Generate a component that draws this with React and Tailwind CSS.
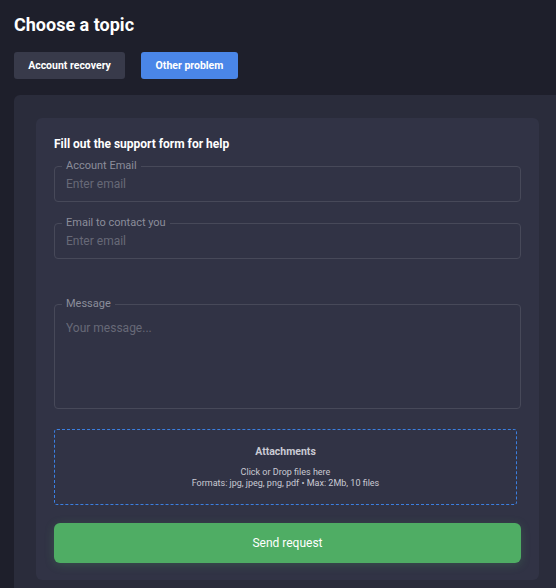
import React, { useState } from 'react';

const Field = ({ label, placeholder }) => (
    <fieldset className="border border-[#474959] rounded-[4px] px-[11px]">
        <legend className="-ml-1 px-1 text-[11px] leading-[14px] text-[#8b8d9a]">{label}</legend>
        <input
            type="text"
            placeholder={placeholder}
            className="block w-full h-4 mt-[3px] mb-[9px] bg-transparent text-[12px] text-[#d0d1d8] placeholder-[#676977] outline-none"
        />
    </fieldset>
);

const App = () => {
    const [topic, setTopic] = useState('other');

    return (
        <div className="min-h-screen bg-[#1e1f2b] pl-[14px] pt-[13px] overflow-hidden" style={{ fontFamily: 'Roboto, "Liberation Sans", sans-serif' }}>
            <h1 className="text-[18px] leading-[24px] font-bold text-white">Choose a topic</h1>

            <div className="flex gap-4 mt-[15px]">
                <button
                    onClick={() => setTopic('account')}
                    className={`h-[27px] w-[111px] rounded-[3px] text-[10.5px] font-bold text-white ${topic === 'account' ? 'bg-[#4a86e8]' : 'bg-[#383a4a]'}`}
                >
                    Account recovery
                </button>
                <button
                    onClick={() => setTopic('other')}
                    className={`h-[27px] w-[97px] rounded-[3px] text-[10.5px] font-bold text-white ${topic === 'other' ? 'bg-[#4a86e8]' : 'bg-[#383a4a]'}`}
                >
                    Other problem
                </button>
            </div>

            <div className="mt-4 bg-[#2a2c3b] rounded-tl-[6px] pl-[22px] pt-[23px] pb-4">
                <div className="w-[503px] bg-[#313345] rounded-[6px] px-[18px] pt-[18px] pb-[17px]">
                    <h2 className="text-[12px] leading-4 font-bold text-white">Fill out the support form for help</h2>

                    <div className="mt-[7px]">
                        <Field label="Account Email" placeholder="Enter email" />
                    </div>
                    <div className="mt-[14px]">
                        <Field label="Email to contact you" placeholder="Enter email" />
                    </div>

                    <fieldset className="mt-[38px] border border-[#474959] rounded-[4px] px-[11px]">
                        <legend className="-ml-1 px-1 text-[11px] leading-[14px] text-[#8b8d9a]">Message</legend>
                        <textarea
                            placeholder="Your message..."
                            className="block w-full h-[88px] mt-[9px] bg-transparent text-[12px] leading-4 text-[#d0d1d8] placeholder-[#676977] outline-none resize-none"
                        />
                    </fieldset>

                    <div className="mt-5 mr-1 h-[76px] border border-dashed border-[#3b7fe0] rounded-[3px] flex flex-col items-center justify-center text-[#c9cad3]">
                        <div className="text-[10.5px] leading-3 font-bold">Attachments</div>
                        <div className="mt-[9px] text-[9px] leading-[11px] text-center">
                            Click or Drop files here
                            <br />
                            Formats: jpg, jpeg, png, pdf • Max: 2Mb, 10 files
                        </div>
                    </div>

                    <button className="mt-[18px] w-full h-10 rounded-[6px] bg-[#4fad64] text-white text-[12px] shadow-[0_2px_10px_rgba(79,173,100,0.25)]">
                        Send request
                    </button>
                </div>
            </div>
        </div>
    );
};

export default App;
